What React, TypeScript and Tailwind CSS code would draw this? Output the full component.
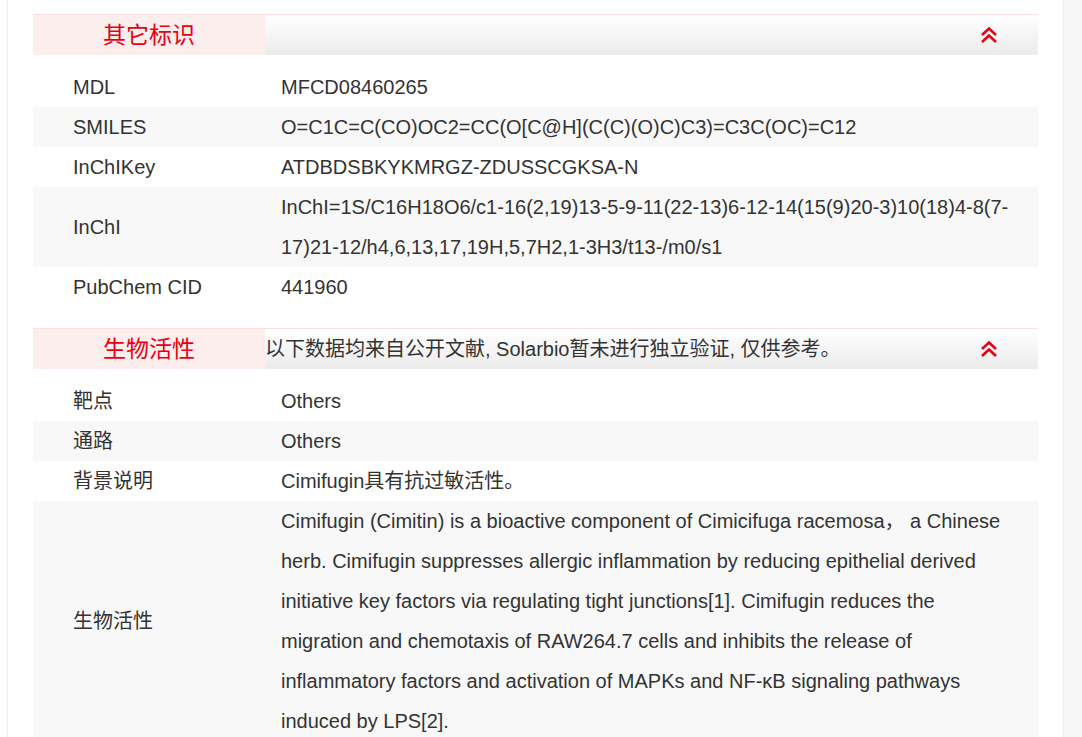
const idRows = [
  { label: "MDL", value: "MFCD08460265" },
  { label: "SMILES", value: "O=C1C=C(CO)OC2=CC(O[C@H](C(C)(O)C)C3)=C3C(OC)=C12" },
  { label: "InChIKey", value: "ATDBDSBKYKMRGZ-ZDUSSCGKSA-N" },
  {
    label: "InChI",
    value:
      "InChI=1S/C16H18O6/c1-16(2,19)13-5-9-11(22-13)6-12-14(15(9)20-3)10(18)4-8(7-17)21-12/h4,6,13,17,19H,5,7H2,1-3H3/t13-/m0/s1",
  },
  { label: "PubChem CID", value: "441960" },
];

const bioRows = [
  { label: "靶点", value: "Others" },
  { label: "通路", value: "Others" },
  { label: "背景说明", value: "Cimifugin具有抗过敏活性。" },
  {
    label: "生物活性",
    value:
      "Cimifugin (Cimitin) is a bioactive component of Cimicifuga racemosa，  a Chinese herb. Cimifugin suppresses allergic inflammation by reducing epithelial derived initiative key factors via regulating tight junctions[1]. Cimifugin reduces the migration and chemotaxis of RAW264.7 cells and inhibits the release of inflammatory factors and activation of MAPKs and NF-κB signaling pathways induced by LPS[2].",
  },
];

function Chevrons() {
  return (
    <svg width="18" height="18" viewBox="0 0 18 18" fill="none" stroke="#e60012" strokeWidth={2.6}>
      <polyline points="2,9 9,2.5 16,9" />
      <polyline points="2,16 9,9.5 16,16" />
    </svg>
  );
}

function Header({ title, note }: { title: string; note?: string }) {
  return (
    <div className="flex h-[41px] border-t border-[#fddede]">
      <div className="flex w-[232px] items-center justify-center bg-[#fdeeee] text-[23px] text-[#e60012]">
        {title}
      </div>
      <div className="flex flex-1 items-center justify-between bg-gradient-to-b from-white to-[#ebebeb] pr-[40px] text-[20px] text-[#333]">
        <span>{note}</span>
        <Chevrons />
      </div>
    </div>
  );
}

function Rows({ rows }: { rows: { label: string; value: string }[] }) {
  return (
    <div className="mt-[12px]">
      {rows.map((r, i) => (
        <div key={r.label} className={`flex items-center text-[20px] text-[#333] ${i % 2 === 1 ? "bg-[#f8f8f8]" : "bg-white"}`}>
          <div className="w-[232px] shrink-0 pl-[40px] leading-[40px]">{r.label}</div>
          <div className="flex-1 break-words pl-[16px] pr-[16px] leading-[40px]">{r.value}</div>
        </div>
      ))}
    </div>
  );
}

export default function App() {
  return (
    <div
      className="flex h-[737px] overflow-hidden bg-white"
      style={{ fontFamily: '"Liberation Sans", Arial, "Noto Sans CJK SC", sans-serif' }}
    >
      <div className="ml-[7px] w-[1057px] shrink-0 border-x border-[#eeeeee] bg-white px-[25px] pt-[14px]">
        <Header title="其它标识" />
        <Rows rows={idRows} />
        <div className="mt-[21px]">
          <Header
            title="生物活性"
            note="以下数据均来自公开文献, Solarbio暂未进行独立验证, 仅供参考。"
          />
        </div>
        <Rows rows={bioRows} />
      </div>
      <div className="flex-1 bg-[#f7f7f7]" />
    </div>
  );
}
